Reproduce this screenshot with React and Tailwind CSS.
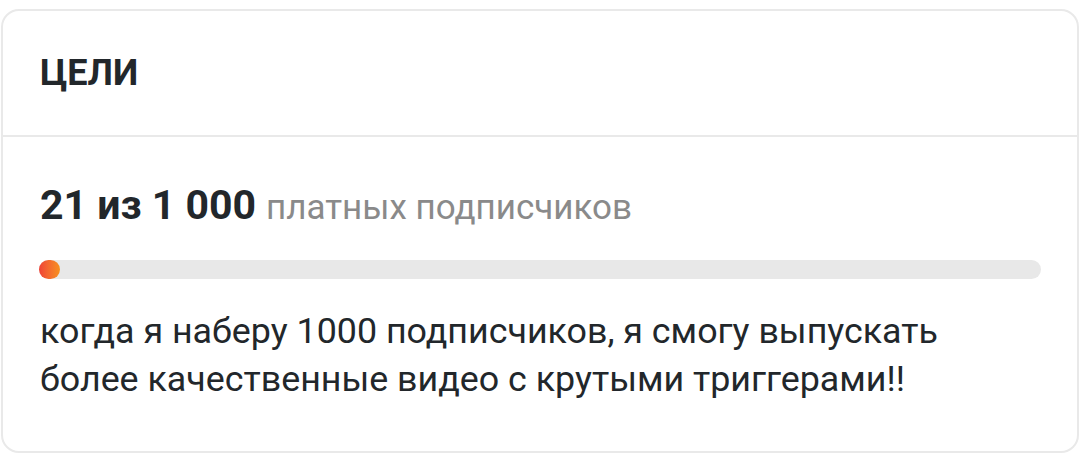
import React from 'react'

const goal = { current: 21, target: 1000 }

export default function App() {
  const pct = Math.max((goal.current / goal.target) * 100, 2)

  return (
    <div className="w-[1080px] h-[456px] bg-white pt-[9px] px-px" style={{ fontFamily: 'Roboto, "Noto Sans", sans-serif' }}>
      <div className="border-2 border-[#e9e9e9] rounded-[18px] bg-white">
        {/* Header */}
        <div className="h-[126px] flex items-center px-[37px] border-b-2 border-[#e9e9e9]">
          <h2 className="text-[36px] font-bold text-[#22272b] leading-none">ЦЕЛИ</h2>
        </div>

        {/* Body */}
        <div className="px-[37px] pt-[48px] pb-[48px]">
          <p className="leading-none whitespace-nowrap">
            <span className="text-[41px] font-bold text-[#22272b]">21 из 1 000</span>
            <span className="text-[35px] text-[#8a8a8a] ml-[10px]">платных подписчиков</span>
          </p>

          <div className="mt-[34px] h-[19px] rounded-full bg-[#e8e8e8] mr-[-1px] ml-[-1px]">
            <div className="h-[19px] rounded-full bg-gradient-to-r from-[#ef4136] to-[#f7901e]" style={{ width: `${pct}%` }} />
          </div>

          <p className="mt-[28px] pr-[40px] text-[35.8px] leading-[48px] text-[#22272b]">
            когда я наберу 1000 подписчиков, я смогу выпускать более качественные видео с крутыми триггерами!!
          </p>
        </div>
      </div>
    </div>
  )
}
